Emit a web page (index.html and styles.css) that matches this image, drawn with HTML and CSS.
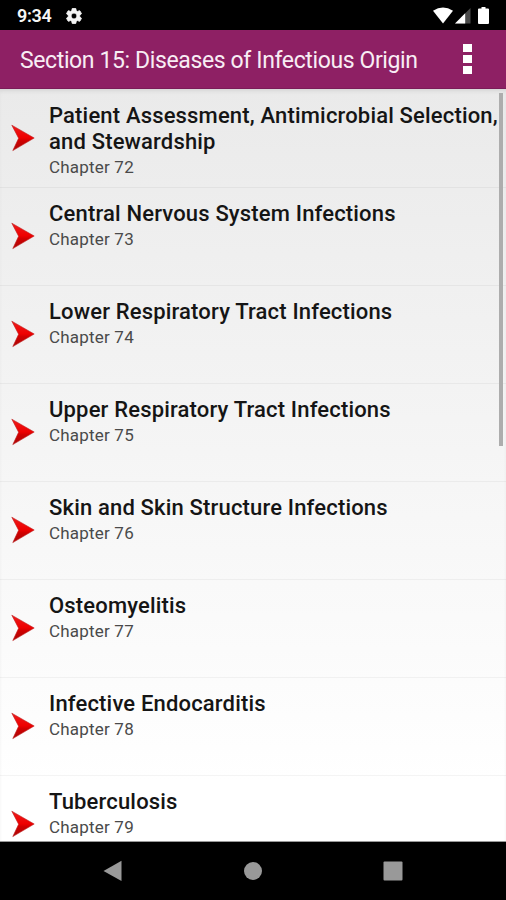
FILE: index.html
```html
<!DOCTYPE html>
<html lang="en">
<head>
<meta charset="utf-8">
<title>Section 15</title>
<link rel="stylesheet" href="styles.css">
</head>
<body>
<svg class="defs" width="0" height="0" aria-hidden="true">
  <defs>
    <linearGradient id="red" x1="0" y1="0" x2="0" y2="1">
      <stop offset="0" stop-color="#ee1c1c"/>
      <stop offset="0.5" stop-color="#ee0000"/>
      <stop offset="0.62" stop-color="#cf0000"/>
      <stop offset="1" stop-color="#a80808"/>
    </linearGradient>
    <symbol id="arrow" viewBox="0 0 24 28">
      <path d="M.8 1.2 23.2 14 1.8 26.6 7.6 14.2Z" fill="url(#red)" stroke="#bd2020" stroke-width=".6"/>
    </symbol>
  </defs>
</svg>
<div class="screen">
  <header class="status">
    <span class="time">9:34</span>
    <svg class="gear" viewBox="2 2 20 20"><path fill="#f4f4f4" stroke="#f4f4f4" d="M19.14 12.94c.04-.3.06-.61.06-.94 0-.32-.02-.64-.07-.94l2.03-1.58c.18-.14.23-.41.12-.61l-1.92-3.32c-.12-.22-.37-.29-.59-.22l-2.39.96c-.5-.38-1.03-.7-1.62-.94l-.36-2.54c-.04-.24-.24-.41-.48-.41h-3.84c-.24 0-.43.17-.47.41l-.36 2.54c-.59.24-1.13.57-1.62.94l-2.39-.96c-.22-.08-.47 0-.59.22L2.74 8.87c-.12.21-.08.47.12.61l2.03 1.58c-.05.3-.09.63-.09.94s.02.64.07.94l-2.03 1.58c-.18.14-.23.41-.12.61l1.92 3.32c.12.22.37.29.59.22l2.39-.96c.5.38 1.03.7 1.62.94l.36 2.54c.05.24.24.41.48.41h3.84c.24 0 .44-.17.47-.41l.36-2.54c.59-.24 1.13-.56 1.62-.94l2.39.96c.22.08.47 0 .59-.22l1.92-3.32c.12-.22.07-.47-.12-.61l-2.01-1.58zM12 15.6c-1.98 0-3.6-1.62-3.6-3.6s1.62-3.6 3.6-3.6 3.6 1.62 3.6 3.6-1.62 3.6-3.6 3.6z"/></svg>
    <svg class="signals" viewBox="0 0 60 20">
      <path fill="#fff" d="M0 4.8Q10 -1.6 20 4.8L10 17.5Z"/>
      <path fill="#4a4a4a" d="M37.5 2V17.5H22Z"/>
      <path fill="#fff" d="M32.2 7.3V17.5H22Z"/>
      <path fill="#fff" d="M48.500 1h4v1.500h2.500a1 1 0 0 1 1 1V17a1 1 0 0 1-1 1h-9a1 1 0 0 1-1-1V3.500a1 1 0 0 1 1-1h2.500Z"/>
    </svg>
  </header>
  <div class="appbar">
    <h1>Section 15: Diseases of Infectious Origin</h1>
    <div class="more"><i></i><i></i><i></i></div>
  </div>
  <main class="list">
    <div class="row"><svg><use href="#arrow"/></svg><div><h2>Patient Assessment, Antimicrobial Selection,<br>and Stewardship</h2><p>Chapter 72</p></div></div>
    <div class="row"><svg><use href="#arrow"/></svg><div><h2>Central Nervous System Infections</h2><p>Chapter 73</p></div></div>
    <div class="row"><svg><use href="#arrow"/></svg><div><h2>Lower Respiratory Tract Infections</h2><p>Chapter 74</p></div></div>
    <div class="row"><svg><use href="#arrow"/></svg><div><h2>Upper Respiratory Tract Infections</h2><p>Chapter 75</p></div></div>
    <div class="row"><svg><use href="#arrow"/></svg><div><h2>Skin and Skin Structure Infections</h2><p>Chapter 76</p></div></div>
    <div class="row"><svg><use href="#arrow"/></svg><div><h2>Osteomyelitis</h2><p>Chapter 77</p></div></div>
    <div class="row"><svg><use href="#arrow"/></svg><div><h2>Infective Endocarditis</h2><p>Chapter 78</p></div></div>
    <div class="row"><svg><use href="#arrow"/></svg><div><h2>Tuberculosis</h2><p>Chapter 79</p></div></div>
    <span class="scrollbar"></span>
  </main>
  <nav class="nav">
    <svg viewBox="0 0 20 22"><path d="M18.500 .8V21L.5 11Z"/></svg>
    <svg viewBox="0 0 20 22"><circle cx="10" cy="11" r="9"/></svg>
    <svg viewBox="0 0 20 22"><rect x=".5" y="1.500" width="19" height="19" rx="1"/></svg>
  </nav>
</div>
</body>
</html>
```

FILE: styles.css
```css
* { box-sizing: border-box; margin: 0; padding: 0; }
body { font-family: Roboto, "Liberation Sans", sans-serif; background: #000; }
.defs { position: absolute; }
.screen { width: 506px; height: 900px; display: flex; flex-direction: column; overflow: hidden; }
.status { height: 30px; flex: none; background: #000; display: flex; align-items: center; padding: 1px 8px 0 17px; }
.time { color: #f6f6f6; font-size: 18px; font-weight: 600; letter-spacing: -.3px; line-height: 28px; width: 49px; }
.gear { width: 16px; height: 16px; }
.signals { width: 60px; height: 20px; margin: 0 5px 0 auto; }
.appbar { height: 59px; flex: none; background: #8e2064; border-bottom: 1px solid #7b1c58; display: flex; align-items: center; justify-content: space-between; padding: 2px 34px 0 20px; }
.appbar h1 { color: #f8edf4; font-size: 23px; font-weight: 400; letter-spacing: -.38px; line-height: 30px; margin-top: 2px; white-space: nowrap; }
.more { display: flex; flex-direction: column; gap: 3px; margin-top: -2px; }
.more i { width: 9px; height: 8px; background: #fff; }
.list { position: relative; height: 753px; flex: none; overflow: hidden; background: linear-gradient(#eaeaea, #fff 92%); border-bottom: 1px solid #999; box-shadow: inset 0 4px 4px -2px #d5d5d5; }
.row { height: 98px; display: flex; padding: 13px 0 0 11px; border-bottom: 1px solid rgba(0, 0, 0, .045); }
.row:first-child { height: 99px; padding-top: 14px; }
.row svg { width: 24px; height: 28px; flex: none; margin: 21px 14px 0 0; }
.row h2 { color: #151515; font-size: 22px; font-weight: 500; letter-spacing: .17px; line-height: 26px; white-space: nowrap; }
.row p { color: #4a4a4a; font-size: 17px; font-weight: 400; letter-spacing: .2px; line-height: 26px; margin-top: -1px; }
.scrollbar { position: absolute; right: 3px; top: 4px; width: 4px; height: 353px; background: #adadad; }
.nav { flex: 1; background: #000; display: flex; justify-content: center; gap: 120px; padding-top: 18px; }
.nav svg { width: 20px; height: 22px; fill: #999; }
```
